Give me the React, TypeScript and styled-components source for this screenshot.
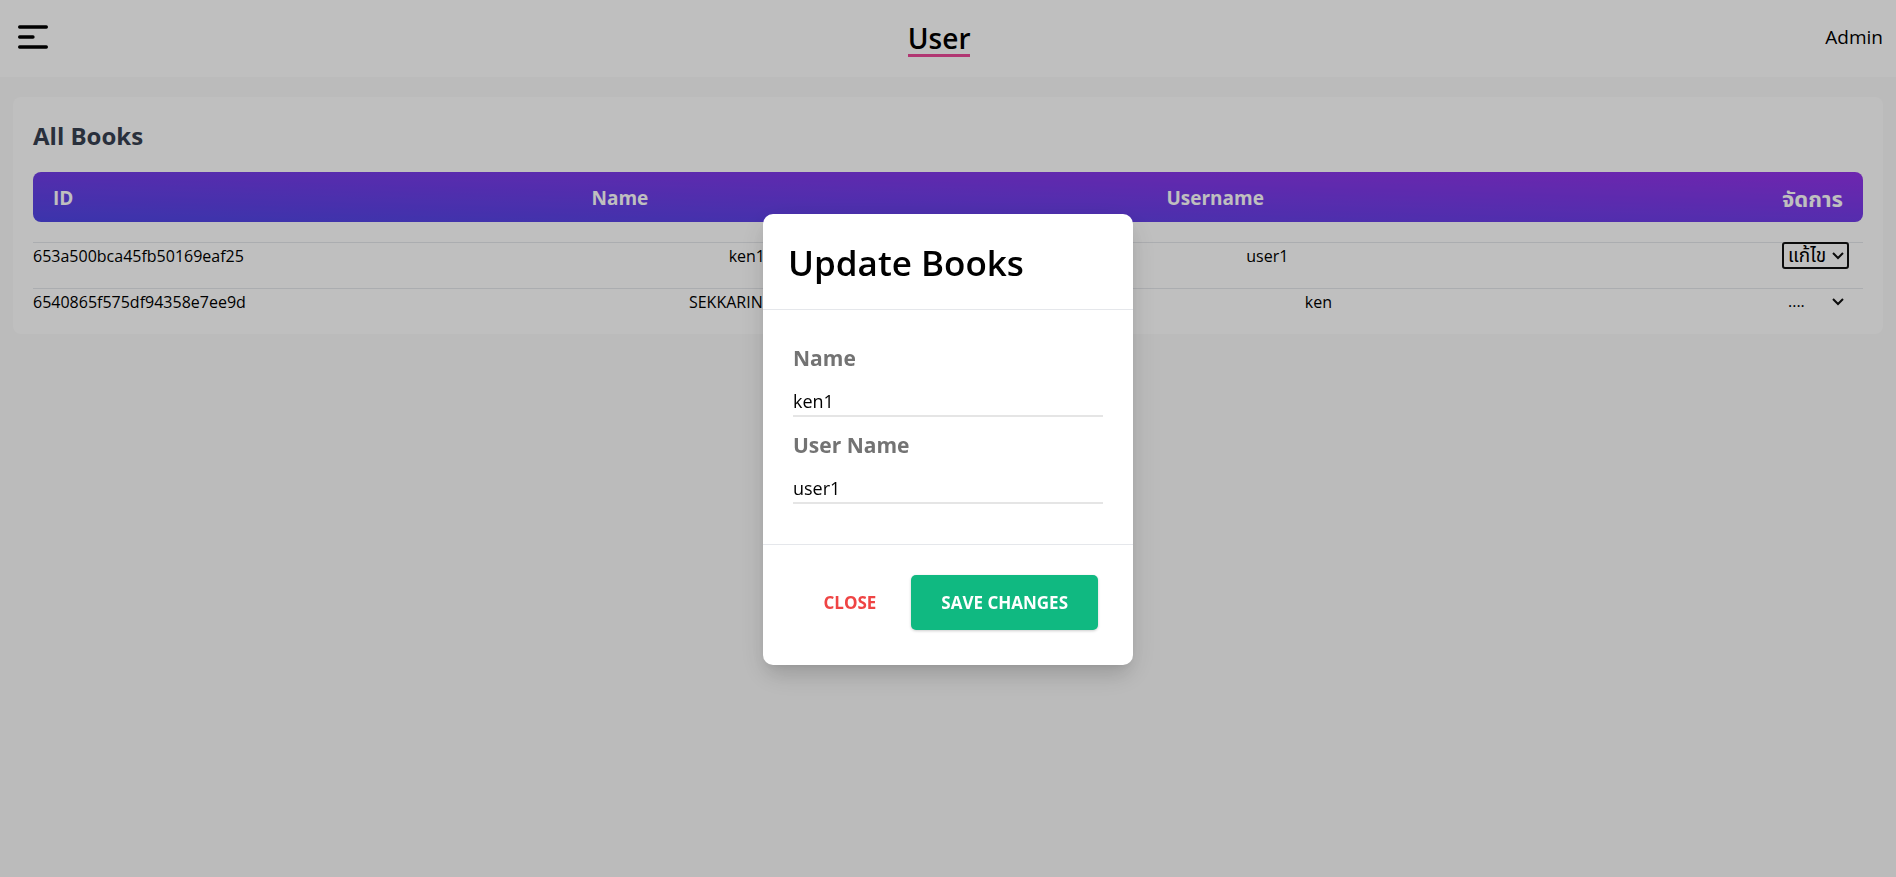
import React, { useState } from 'react';
import styled, { createGlobalStyle } from 'styled-components';

const GlobalStyle = createGlobalStyle`
  *, *::before, *::after { box-sizing: border-box; }
  body {
    margin: 0;
    background: #fafafa;
    color: #000;
    font-family: "Open Sans", "Noto Sans", "Noto Sans Thai", sans-serif;
    font-size: 16px;
    line-height: 24px;
  }
  h1, h2, h3 { margin: 0; }
  button, input, select { font: inherit; color: inherit; }
`;

const TopBar = styled.header`
  display: flex;
  align-items: center;
  justify-content: space-between;
  height: 77px;
  padding: 0 13px 3px;
  background: #fff;
`;

const MenuButton = styled.button`
  display: flex;
  padding: 0;
  border: 0;
  background: none;
  cursor: pointer;
`;

const PageTitle = styled.h1`
  padding-top: 5px;
  border-bottom: 3px solid #ec4899;
  font-size: 28px;
  line-height: 32px;
  font-weight: 600;
`;

const Account = styled.span`
  font-size: 19px;
`;

const Main = styled.main`
  padding: 20px 13px;
`;

const Card = styled.section`
  padding: 20px;
  border-radius: 8px;
  background: #fff;
`;

const CardTitle = styled.h2`
  margin-bottom: 17px;
  color: #374151;
  font-size: 24px;
  line-height: 38px;
  font-weight: 700;
`;

const Table = styled.table`
  display: block;
`;

const TableHead = styled.thead`
  display: block;
`;

const TableBody = styled.tbody`
  display: block;
`;

const HeadRow = styled.tr`
  display: flex;
  align-items: center;
  justify-content: space-between;
  height: 50px;
  padding: 2px 20px 0;
  border-radius: 8px;
  background: linear-gradient(to top right, #4f46e5, #9333ea);
  color: #fff;
`;

const HeadCell = styled.th<{ $large?: boolean }>`
  padding: 0;
  font-size: ${(p) => (p.$large ? 22 : 19)}px;
  font-weight: 700;
`;

const Row = styled.tr`
  display: flex;
  justify-content: space-between;
  height: 26px;
  margin-top: 20px;
  border-top: 1px solid #e5e7eb;
`;

const Cell = styled.td<{ $minWidth?: number }>`
  min-width: ${(p) => p.$minWidth ?? 0}px;
  padding: 0;
  line-height: 26px;
  white-space: nowrap;
`;

const ActionCell = styled.td`
  padding: 0 15px;
`;

const SelectBox = styled.div`
  display: grid;
  grid-template-columns: 65px;
  align-items: center;

  > * {
    grid-area: 1 / 1;
  }

  > svg {
    justify-self: end;
    margin-right: 4px;
    pointer-events: none;
  }
`;

const ActionSelect = styled.select<{ $active: boolean }>`
  appearance: none;
  width: 100%;
  height: 25px;
  padding: 0 5px;
  border: 0;
  border-radius: 2px;
  outline: ${(p) => (p.$active ? '2px solid #101010' : 'none')};
  outline-offset: -1px;
  background: transparent;
  font-size: ${(p) => (p.$active ? 19 : 16)}px;
  line-height: 25px;
`;

const Backdrop = styled.div`
  position: fixed;
  inset: 0;
  display: flex;
  align-items: center;
  justify-content: center;
  padding-top: 2px;
  background: rgba(0, 0, 0, 0.25);
`;

const Dialog = styled.form`
  display: flex;
  flex-direction: column;
  width: 370px;
  border-radius: 10px;
  background: #fff;
  box-shadow: 0 12px 19px -4px rgba(0, 0, 0, 0.1), 0 5px 8px -5px rgba(0, 0, 0, 0.1),
    0 10px 30px rgba(0, 0, 0, 0.1);
`;

const DialogHeader = styled.header`
  padding: 26px 25px 24px;
  border-bottom: 1px solid #e5e7eb;
`;

const DialogTitle = styled.h3`
  font-size: 35px;
  line-height: 45px;
  font-weight: 600;
`;

const DialogBody = styled.div`
  display: flex;
  flex-direction: column;
  gap: 10px;
  padding: 30px 30px 40px;
`;

const Field = styled.div`
  display: flex;
  flex-direction: column;
  gap: 10px;
`;

const Label = styled.label`
  color: #737373;
  font-size: 21px;
  line-height: 37px;
  font-weight: 700;
`;

const TextInput = styled.input`
  width: 100%;
  height: 30px;
  padding: 0;
  border: 0;
  border-bottom: 2px solid #e5e5e5;
  outline: none;
  background: transparent;
  font-size: 18px;
`;

const DialogFooter = styled.footer`
  display: flex;
  justify-content: flex-end;
  gap: 5px;
  padding: 30px 35px 35px;
  border-top: 1px solid #e5e7eb;
`;

const Button = styled.button<{ $filled?: boolean }>`
  height: 55px;
  padding: 0 30px;
  border: 0;
  border-radius: 5px;
  background: ${(p) => (p.$filled ? '#10b981' : 'transparent')};
  box-shadow: ${(p) => (p.$filled ? '0 1px 3px rgba(0, 0, 0, 0.2)' : 'none')};
  color: ${(p) => (p.$filled ? '#fff' : '#ef4444')};
  font-size: 17px;
  font-weight: 700;
  text-transform: uppercase;
  white-space: nowrap;
  cursor: pointer;
`;

interface User {
  id: string;
  name: string;
  username: string;
  action: string;
  idWidth: number;
  nameWidth: number;
}

const users: User[] = [
  { id: '653a500bca45fb50169eaf25', name: 'ken1', username: 'user1', action: 'edit', idWidth: 216, nameWidth: 38 },
  { id: '6540865f575df94358e7ee9d', name: 'SEKKARIN', username: 'ken', action: 'none', idWidth: 220, nameWidth: 180 },
];

export default function App() {
  const [name, setName] = useState('ken1');
  const [username, setUsername] = useState('user1');

  return (
    <>
      <GlobalStyle />
      <TopBar>
        <MenuButton type="button" aria-label="Menu">
          <svg width="40" height="40" viewBox="0 0 24 24" fill="none" stroke="#000" strokeWidth="2" strokeLinecap="round">
            <path d="M4 6h16M4 12h8M4 18h16" />
          </svg>
        </MenuButton>
        <PageTitle>User</PageTitle>
        <Account>Admin</Account>
      </TopBar>
      <Main>
        <Card>
          <CardTitle>All Books</CardTitle>
          <Table>
            <TableHead>
              <HeadRow>
                <HeadCell>ID</HeadCell>
                <HeadCell>Name</HeadCell>
                <HeadCell>Username</HeadCell>
                <HeadCell $large>จัดการ</HeadCell>
              </HeadRow>
            </TableHead>
            <TableBody>
              {users.map((user) => (
                <Row key={user.id}>
                  <Cell $minWidth={user.idWidth}>{user.id}</Cell>
                  <Cell $minWidth={user.nameWidth}>{user.name}</Cell>
                  <Cell>{user.username}</Cell>
                  <ActionCell>
                    <SelectBox>
                      <ActionSelect
                        aria-label={`จัดการ ${user.username}`}
                        $active={user.action === 'edit'}
                        defaultValue={user.action}
                      >
                        <option value="none">....</option>
                        <option value="edit">แก้ไข</option>
                      </ActionSelect>
                      <svg width="12" height="8" viewBox="0 0 12 8" fill="none" stroke="#101010" strokeWidth="2">
                        <path d="M1 1l5 5 5-5" />
                      </svg>
                    </SelectBox>
                  </ActionCell>
                </Row>
              ))}
            </TableBody>
          </Table>
        </Card>
      </Main>
      <Backdrop>
        <Dialog role="dialog" aria-labelledby="dialog-title" onSubmit={(e) => e.preventDefault()}>
          <DialogHeader>
            <DialogTitle id="dialog-title">Update Books</DialogTitle>
          </DialogHeader>
          <DialogBody>
            <Field>
              <Label htmlFor="name">Name</Label>
              <TextInput id="name" value={name} onChange={(e) => setName(e.target.value)} />
            </Field>
            <Field>
              <Label htmlFor="username">User Name</Label>
              <TextInput id="username" value={username} onChange={(e) => setUsername(e.target.value)} />
            </Field>
          </DialogBody>
          <DialogFooter>
            <Button type="button">Close</Button>
            <Button type="submit" $filled>Save Changes</Button>
          </DialogFooter>
        </Dialog>
      </Backdrop>
    </>
  );
}
